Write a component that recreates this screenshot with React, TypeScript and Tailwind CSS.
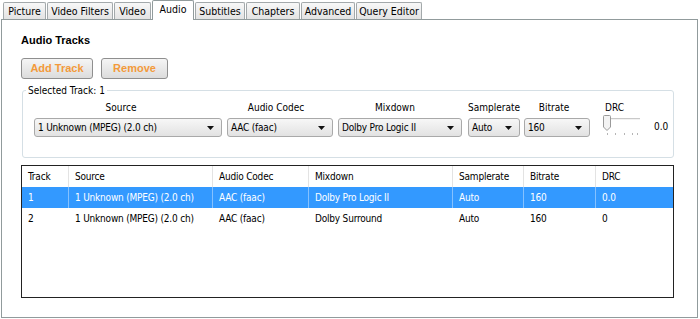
const tabs = [
  { label: 'Picture', w: 'w-[43px]' },
  { label: 'Video Filters', w: 'w-[66px]' },
  { label: 'Video', w: 'w-[37px]' },
  { label: 'Audio', w: 'w-[42px]', active: true },
  { label: 'Subtitles', w: 'w-[50px]' },
  { label: 'Chapters', w: 'w-[54px]' },
  { label: 'Advanced', w: 'w-[54px]' },
  { label: 'Query Editor', w: 'w-[66px]' },
];

const rows = [
  ['1', '1 Unknown (MPEG) (2.0 ch)', 'AAC (faac)', 'Dolby Pro Logic II', 'Auto', '160', '0.0'],
  ['2', '1 Unknown (MPEG) (2.0 ch)', 'AAC (faac)', 'Dolby Surround', 'Auto', '160', '0'],
];

const headers = ['Track', 'Source', 'Audio Codec', 'Mixdown', 'Samplerate', 'Bitrate', 'DRC'];

function Arrow() {
  return (
    <svg width="7" height="4" viewBox="0 0 7 4" className="shrink-0">
      <path d="M0 0 L7 0 L3.5 4 Z" fill="#111" />
    </svg>
  );
}

function Select({ value }: { value: string }) {
  return (
    <div className="w-full mt-[4px] h-[19px] flex items-center justify-between pl-[3px] pr-[7px] rounded-[3px] border border-[#a9a9a9] bg-gradient-to-b from-[#f7f7f7] to-[#e2e2e2] leading-[13px] tracking-[-0.2px]">
      <span className="whitespace-nowrap">{value}</span>
      <Arrow />
    </div>
  );
}

function Field({
  label,
  value,
  w,
  ml,
  pr,
}: {
  label: string;
  value: string;
  w: string;
  ml: string;
  pr: string;
}) {
  return (
    <div className={`flex flex-col shrink-0 ${w} ${ml}`}>
      <div className={`text-center leading-[13px] whitespace-nowrap ${pr}`}>{label}</div>
      <Select value={value} />
    </div>
  );
}

function DrcSlider() {
  return (
    <svg width="42" height="22" viewBox="0 0 42 22">
      <line x1="7" y1="3.5" x2="38" y2="3.5" stroke="#c9c9c9" strokeWidth="1" />
      <line x1="7" y1="4.5" x2="38" y2="4.5" stroke="#f2f2f2" strokeWidth="1" />
      <path
        d="M1.5 1.5 Q1.5 0.5 2.5 0.5 L7.5 0.5 Q8.5 0.5 8.5 1.5 L8.5 12 L5 15.5 L1.5 12 Z"
        fill="#f3f3f3"
        stroke="#9a9a9a"
        strokeWidth="1"
      />
      {[5, 13, 22, 30, 35].map((x) => (
        <line key={x} x1={x + 0.5} y1="18" x2={x + 0.5} y2="20" stroke="#b5b5b5" strokeWidth="1" />
      ))}
    </svg>
  );
}

export default function App() {
  return (
    <div className="w-[700px] h-[319px] bg-white overflow-hidden font-['DejaVu_Sans_Condensed','DejaVu_Sans','Liberation_Sans',sans-serif] text-[10px] text-black">
      {/* tab strip */}
      <div className="h-[19px] flex items-end pl-[3px] gap-[1px] text-[10.5px]">
        {tabs.map((t) =>
          t.active ? (
            <div
              key={t.label}
              className={`${t.w} h-[20px] -mb-[1px] relative z-10 bg-white border border-b-0 border-[#919b9c] rounded-t-[2px] flex justify-center pt-[2px] leading-[13px]`}
            >
              {t.label}
            </div>
          ) : (
            <div
              key={t.label}
              className={`${t.w} h-[17px] bg-gradient-to-b from-[#f8f8f8] to-[#e3e3e3] border border-b-0 border-[#a3a9ab] rounded-t-[2px] flex justify-center pt-[2px] leading-[13px] whitespace-nowrap`}
            >
              {t.label}
            </div>
          )
        )}
      </div>

      {/* panel */}
      <div className="ml-[1px] w-[697px] h-[299px] border border-[#919b9c] pl-[19px] pt-[14px]">
        <div className="font-['Liberation_Sans',Arial,sans-serif] text-[11px] font-bold leading-[13px]">Audio Tracks</div>

        <div className="flex gap-[8px] mt-[11px] font-['Liberation_Sans',Arial,sans-serif] text-[11px]">
          <button className="w-[72px] h-[21px] rounded-[3px] border border-[#8f8f8f] bg-gradient-to-b from-[#f5f5f5] to-[#dcdcdc] text-[#f39a3b] font-bold leading-[13px]">
            Add Track
          </button>
          <button className="w-[67px] h-[21px] rounded-[3px] border border-[#8f8f8f] bg-gradient-to-b from-[#f5f5f5] to-[#dcdcdc] text-[#f39a3b] font-bold leading-[13px]">
            Remove
          </button>
        </div>

        <fieldset className="ml-[1px] mt-[5px] w-[652px] border border-[#d5dfe5] rounded-[3px] pl-[11px] pt-[4px] pb-[20px]">
          <legend className="-ml-[8px] px-[2px] leading-[13px]">Selected Track: 1</legend>
          <div className="flex items-start">
            <Field label="Source" value="1 Unknown (MPEG) (2.0 ch)" w="w-[188px]" ml="ml-0" pr="pr-[14px]" />
            <Field label="Audio Codec" value="AAC (faac)" w="w-[106px]" ml="ml-[5px]" pr="pr-[8px]" />
            <Field label="Mixdown" value="Dolby Pro Logic II" w="w-[124px]" ml="ml-[5px]" pr="pr-[10px]" />
            <Field label="Samplerate" value="Auto" w="w-[52px]" ml="ml-[6px]" pr="pr-0" />
            <Field label="Bitrate" value="160" w="w-[66px]" ml="ml-[4px]" pr="pr-[6px]" />
            <div className="flex flex-col ml-[12px]">
              <div className="ml-[3px] leading-[13px]">DRC</div>
              <div className="flex items-start mt-[1px]">
                <DrcSlider />
                <span className="ml-[10px] mt-[5px] leading-[13px]">0.0</span>
              </div>
            </div>
          </div>
        </fieldset>

        <div className="mt-[7px] w-[653px] h-[133px] border border-[#222] tracking-[-0.2px]">
          <div className="grid grid-cols-[47px_144px_96px_144px_71px_72px_77px]">
            {headers.map((h, i) => (
              <div
                key={h}
                className={`h-[21px] flex items-center pl-[6px] leading-[13px] ${
                  i < headers.length - 1 ? 'border-r border-[#e3e3e3]' : ''
                }`}
              >
                {h}
              </div>
            ))}
            {rows.map((r, ri) =>
              r.map((c, ci) => (
                <div
                  key={`${ri}-${ci}`}
                  className={`h-[21px] flex items-center pl-[6px] leading-[13px] whitespace-nowrap overflow-hidden ${
                    ri === 0 ? 'bg-[#3399ff] text-white' : ''
                  } ${
                    ci < r.length - 1
                      ? ri === 0
                        ? 'border-r border-[#85c1ff]'
                        : 'border-r border-transparent'
                      : ''
                  }`}
                >
                  {c}
                </div>
              ))
            )}
          </div>
        </div>
      </div>
    </div>
  );
}
